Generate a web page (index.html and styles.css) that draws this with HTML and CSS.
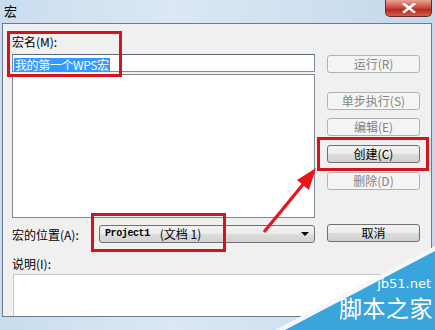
FILE: index.html
```html
<!DOCTYPE html>
<html lang="zh-CN">

<head>
    <meta charset="UTF-8">
    <title>宏</title>
    <link rel="stylesheet" href="styles.css">
</head>

<body>
    <div class="window">
        <div class="titlebar">
            <span class="title">宏</span>
            <button class="close">
                <svg width="14" height="10" viewBox="0 0 14 10">
                    <path d="M2 1 L12 9 M12 1 L2 9" stroke="#fff" stroke-width="2.6" stroke-linecap="square" fill="none"/>
                </svg>
            </button>
        </div>

        <div class="client">
            <label class="lbl name-lbl">宏名(<u>M</u>):</label>
            <div class="name-input"><span class="sel">我的第一个WPS宏</span></div>
            <div class="listbox"></div>

            <div class="buttons">
                <button class="btn off run">运行(<u>R</u>)</button>
                <button class="btn off step">单步执行(<u>S</u>)</button>
                <button class="btn off edit">编辑(<u>E</u>)</button>
                <button class="btn create">创建(<u>C</u>)</button>
                <button class="btn off del">删除(<u>D</u>)</button>
            </div>

            <div class="loc-row">
                <label class="lbl">宏的位置(<u>A</u>):</label>
                <div class="select">
                    <span class="mono">Project1</span>
                    <span class="doc">(文档 1)</span>
                    <span class="arrow"></span>
                </div>
            </div>
            <button class="btn cancel">取消</button>

            <label class="lbl desc-lbl">说明(<u>I</u>):</label>
            <div class="desc"></div>
        </div>

        <!-- 标注 -->
        <div class="mark mark-name"></div>
        <div class="mark mark-create"></div>
        <div class="mark mark-loc"></div>
        <svg class="pointer" width="435" height="330" viewBox="0 0 435 330">
            <line x1="264" y1="232" x2="305" y2="182" stroke="#e8141c" stroke-width="3.2"/>
            <polygon points="316,168 297,180 309,190" fill="#e8141c"/>
        </svg>

        <!-- 水印 -->
        <div class="watermark">
            <svg width="160" height="84" viewBox="0 0 160 84">
                <polygon points="0,84 160,0 160,84" fill="#f4f8fb"/>
                <polygon points="10,84 160,5 160,84" fill="#3aa4dc"/>
            </svg>
            <span class="wm-url">jb51.net</span>
            <span class="wm-name">脚本之家</span>
        </div>
    </div>
</body>

</html>
```

FILE: styles.css
```css
body {
    margin: 0;
    font-family: "Noto Sans CJK SC", sans-serif;
    font-size: 12px;
    color: #000;
}

.window {
    position: relative;
    width: 435px;
    height: 330px;
    overflow: hidden;
    background: linear-gradient(90deg, #c9ddef, #dbe8f4 40%, #cfe0f0 70%, #c3d8ec);
}

.titlebar {
    height: 23px;
    display: flex;
    align-items: flex-start;
}

.title {
    margin: 3px 0 0 4px;
    font-size: 13px;
    line-height: 16px;
}

.close {
    margin-left: auto;
    margin-right: 3px;
    width: 47px;
    height: 17px;
    padding: 0;
    border: 1px solid #6b2a24;
    border-top: none;
    border-radius: 0 0 5px 5px;
    background: linear-gradient(#e9a596, #c8473a 50%, #b8291c 60%, #cf5f4c);
    display: flex;
    align-items: center;
    justify-content: center;
}

.client {
    margin: 0 3px 0 2px;
    height: 294px;
    box-sizing: border-box;
    border: 1px solid #6b7a8c;
    background: #f0f0f0;
    padding: 10px 9px 0 9px;
    display: grid;
    grid-template-columns: 303px 93px;
    grid-template-rows: 20px 20px 151px 32px 17px 42px;
    column-gap: 12px;
}

.lbl {
    line-height: 16px;
}

.lbl u {
    text-decoration: none;
}

.name-lbl {
    grid-column: 1;
    grid-row: 1;
}

.name-input {
    grid-column: 1;
    grid-row: 2;
    height: 18px;
    box-sizing: border-box;
    border: 1px solid #7b8b9b;
    border-top-color: #5d6b78;
    background: #fff;
    padding: 1px 0 0 1px;
}

.sel {
    display: inline-block;
    background: #3399ff;
    color: #fff;
    line-height: 14px;
    padding: 0 1px;
    letter-spacing: -0.4px;
}

.listbox {
    grid-column: 1;
    grid-row: 3;
    height: 144px;
    box-sizing: border-box;
    border: 1px solid #828790;
    background: #fff;
}

.buttons {
    grid-column: 2;
    grid-row: 2 / 4;
    display: flex;
    flex-direction: column;
}

.btn {
    height: 18px;
    width: 93px;
    padding: 0;
    box-sizing: border-box;
    border: 1px solid #707070;
    border-radius: 3px;
    background: linear-gradient(#f3f3f3, #ebebeb 50%, #dcdcdc 51%, #d0d0d0);
    font-family: "Noto Sans CJK SC", sans-serif;
    font-size: 12px;
    line-height: 14px;
    color: #000;
}

.btn u {
    text-decoration: none;
}

.btn.off {
    border-color: #adb2b5;
    background: #f4f4f4;
    color: #838383;
}

.run {
    margin-top: 1px;
}

.step {
    margin-top: 19px;
}

.edit {
    margin-top: 8px;
}

.create {
    margin-top: 9px;
}

.del {
    margin-top: 9px;
}

.loc-row {
    grid-column: 1;
    grid-row: 4;
    display: flex;
    align-items: flex-start;
    justify-content: space-between;
}

.loc-row .lbl {
    margin-top: 2px;
}

.select {
    width: 216px;
    height: 18px;
    box-sizing: border-box;
    border: 1px solid #707070;
    border-radius: 3px;
    background: linear-gradient(#f3f3f3, #ebebeb 50%, #dddddd 51%, #d2d2d2);
    display: flex;
    align-items: center;
    padding: 0 5px 0 5px;
}

.mono {
    font-family: "Liberation Mono", monospace;
    font-size: 10px;
    line-height: 14px;
    letter-spacing: -0.4px;
    font-weight: bold;
}

.doc {
    margin-left: 10px;
    line-height: 14px;
}

.arrow {
    margin-left: auto;
    width: 0;
    height: 0;
    border-left: 4px solid transparent;
    border-right: 4px solid transparent;
    border-top: 4px solid #000;
}

.cancel {
    grid-column: 2;
    grid-row: 4;
    margin-top: -1px;
}

.desc-lbl {
    grid-column: 1;
    grid-row: 5;
    line-height: 14px;
}

.desc {
    grid-column: 1 / 3;
    grid-row: 6;
    margin-left: 1px;
    border: 1px solid #c8c8c8;
    border-bottom: none;
    background: #fff;
}

.mark {
    position: absolute;
    border: 3px solid #d4131d;
}

.mark-name {
    left: 7px;
    top: 31px;
    width: 109px;
    height: 40px;
}

.mark-create {
    left: 317px;
    top: 137px;
    width: 106px;
    height: 28px;
}

.mark-loc {
    left: 91px;
    top: 213px;
    width: 129px;
    height: 33px;
}

.pointer {
    position: absolute;
    left: 0;
    top: 0;
}

.watermark {
    position: absolute;
    right: 0;
    bottom: 0;
    width: 160px;
    height: 84px;
}

.watermark svg {
    position: absolute;
    left: 0;
    top: 0;
}

.wm-url {
    position: absolute;
    right: 4px;
    top: 31px;
    color: #fff;
    font-family: "DejaVu Sans", sans-serif;
    font-size: 13px;
    line-height: 14px;
}

.wm-name {
    position: absolute;
    right: 2px;
    top: 47px;
    color: #fff;
    font-size: 23px;
    line-height: 28px;
    letter-spacing: 0.5px;
}
```
